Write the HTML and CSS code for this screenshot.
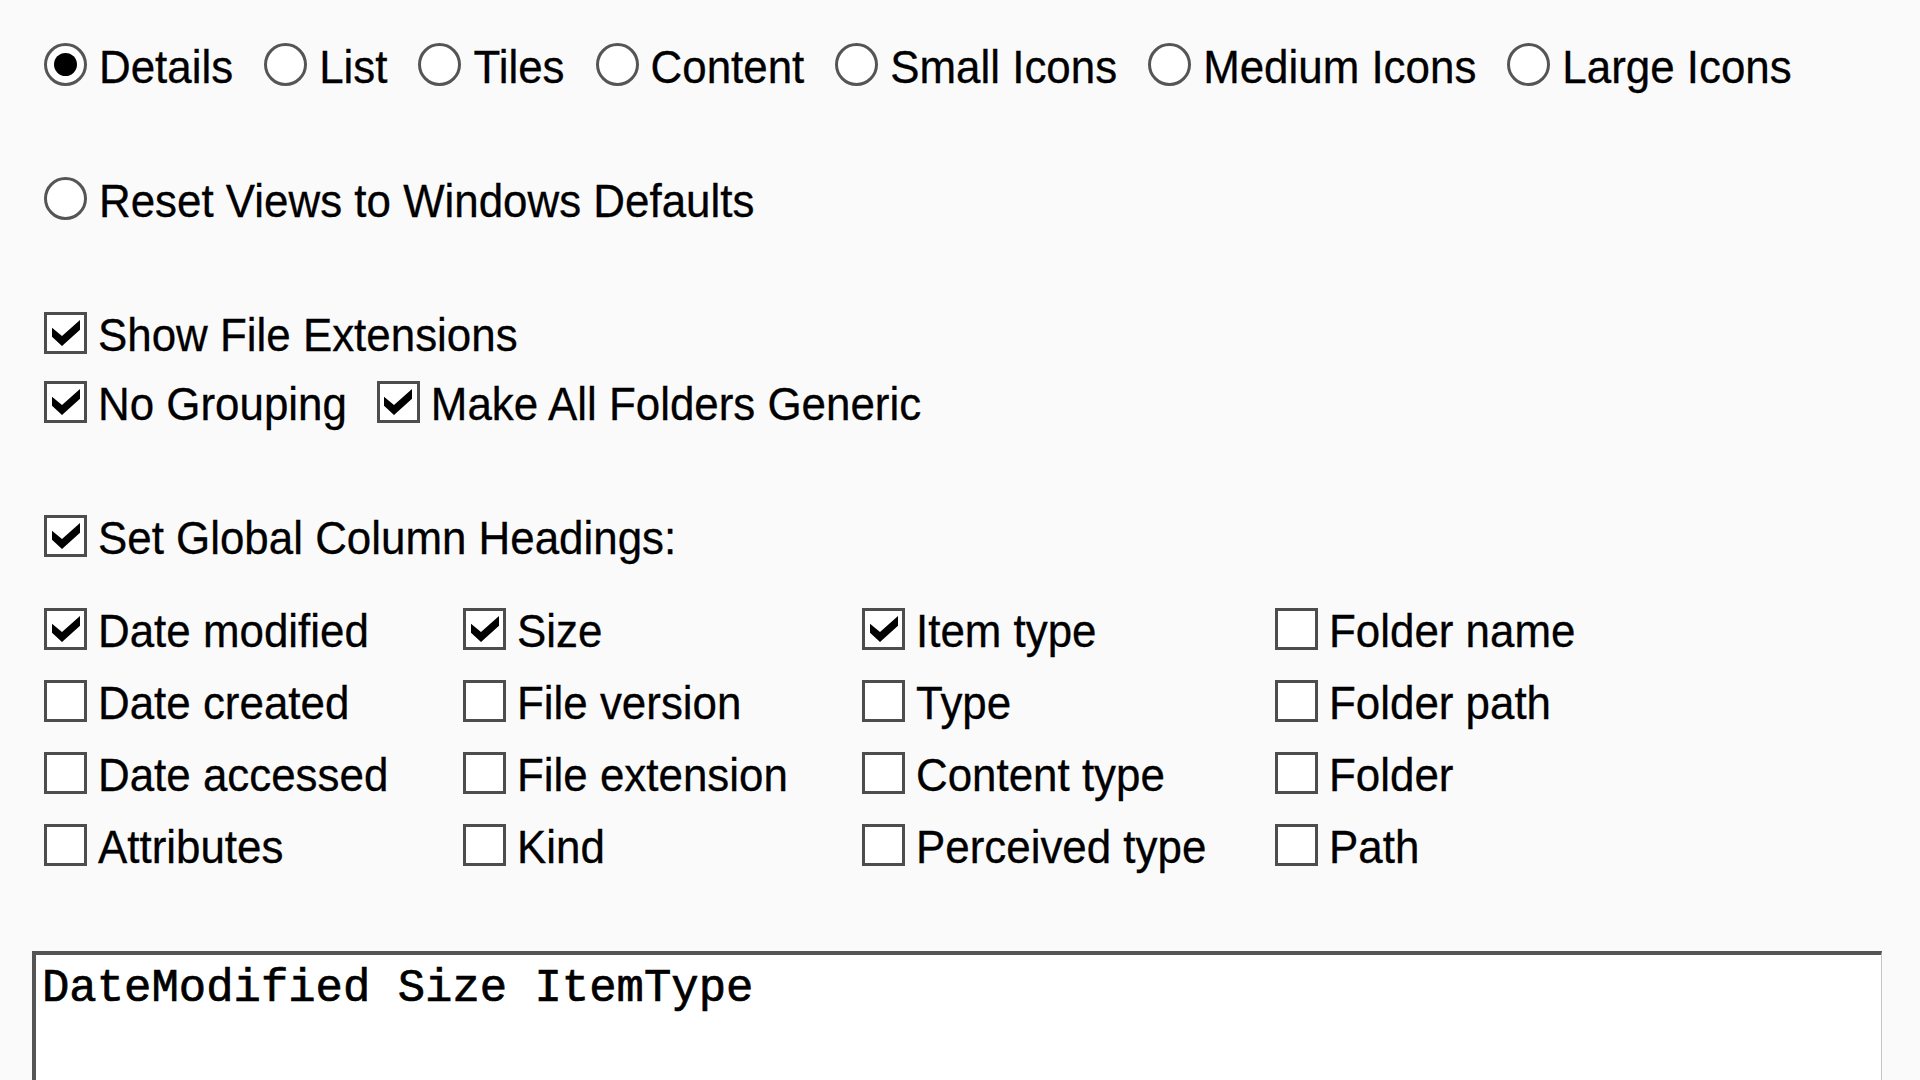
FILE: index.html
```html
<!DOCTYPE html>
<html lang="en">
<head>
<meta charset="utf-8">
<title>Folder View Options</title>
<link rel="stylesheet" href="styles.css">
</head>
<body>
<div class="page">
  <div class="row views">
    <div class="opt"><span class="radio"><span class="dot"></span></span><span class="label">Details</span></div>
    <div class="opt"><span class="radio"></span><span class="label">List</span></div>
    <div class="opt"><span class="radio"></span><span class="label">Tiles</span></div>
    <div class="opt"><span class="radio"></span><span class="label">Content</span></div>
    <div class="opt"><span class="radio"></span><span class="label">Small Icons</span></div>
    <div class="opt"><span class="radio"></span><span class="label">Medium Icons</span></div>
    <div class="opt"><span class="radio"></span><span class="label">Large Icons</span></div>
  </div>

  <div class="row reset">
    <div class="opt"><span class="radio"></span><span class="label">Reset Views to Windows Defaults</span></div>
  </div>

  <div class="row show">
    <div class="opt"><span class="box"><svg class="check" viewBox="0 0 7 7.5" preserveAspectRatio="none"><polygon points="0,2.2 2.5,4.6 7,0 7,2.8 2.5,7.5 0,4.8"/></svg></span><span class="label">Show File Extensions</span></div>
  </div>

  <div class="row nogroup">
    <div class="opt"><span class="box"><svg class="check" viewBox="0 0 7 7.5" preserveAspectRatio="none"><polygon points="0,2.2 2.5,4.6 7,0 7,2.8 2.5,7.5 0,4.8"/></svg></span><span class="label">No Grouping</span></div>
    <div class="opt"><span class="box"><svg class="check" viewBox="0 0 7 7.5" preserveAspectRatio="none"><polygon points="0,2.2 2.5,4.6 7,0 7,2.8 2.5,7.5 0,4.8"/></svg></span><span class="label">Make All Folders Generic</span></div>
  </div>

  <div class="row setglobal">
    <div class="opt"><span class="box"><svg class="check" viewBox="0 0 7 7.5" preserveAspectRatio="none"><polygon points="0,2.2 2.5,4.6 7,0 7,2.8 2.5,7.5 0,4.8"/></svg></span><span class="label">Set Global Column Headings:</span></div>
  </div>

  <div class="grid">
    <div class="opt"><span class="box"><svg class="check" viewBox="0 0 7 7.5" preserveAspectRatio="none"><polygon points="0,2.2 2.5,4.6 7,0 7,2.8 2.5,7.5 0,4.8"/></svg></span><span class="label">Date modified</span></div>
    <div class="opt"><span class="box"><svg class="check" viewBox="0 0 7 7.5" preserveAspectRatio="none"><polygon points="0,2.2 2.5,4.6 7,0 7,2.8 2.5,7.5 0,4.8"/></svg></span><span class="label">Size</span></div>
    <div class="opt"><span class="box"><svg class="check" viewBox="0 0 7 7.5" preserveAspectRatio="none"><polygon points="0,2.2 2.5,4.6 7,0 7,2.8 2.5,7.5 0,4.8"/></svg></span><span class="label">Item type</span></div>
    <div class="opt"><span class="box"></span><span class="label">Folder name</span></div>

    <div class="opt"><span class="box"></span><span class="label">Date created</span></div>
    <div class="opt"><span class="box"></span><span class="label">File version</span></div>
    <div class="opt"><span class="box"></span><span class="label">Type</span></div>
    <div class="opt"><span class="box"></span><span class="label">Folder path</span></div>

    <div class="opt"><span class="box"></span><span class="label">Date accessed</span></div>
    <div class="opt"><span class="box"></span><span class="label">File extension</span></div>
    <div class="opt"><span class="box"></span><span class="label">Content type</span></div>
    <div class="opt"><span class="box"></span><span class="label">Folder</span></div>

    <div class="opt"><span class="box"></span><span class="label">Attributes</span></div>
    <div class="opt"><span class="box"></span><span class="label">Kind</span></div>
    <div class="opt"><span class="box"></span><span class="label">Perceived type</span></div>
    <div class="opt"><span class="box"></span><span class="label">Path</span></div>
  </div>

  <div class="textbox">DateModified Size ItemType</div>
</div>
</body>
</html>
```

FILE: styles.css
```css
html, body {
  margin: 0;
  padding: 0;
  height: 100%;
  overflow: hidden;
  background: #fafafa;
}

.page {
  padding: 43px 0 0 32px;
  font-family: "Liberation Sans", Arial, sans-serif;
  font-size: 43.9px;
  color: #000;
}

.row {
  display: flex;
  align-items: center;
  height: 43px;
  padding-left: 12px;
}

.views { gap: 31px; }
.reset { margin-top: 91px; }
.show { margin-top: 91px; }
.nogroup { margin-top: 26px; gap: 30px; }
.setglobal { margin-top: 91px; }

.grid {
  margin-top: 50px;
  padding-left: 12px;
  display: grid;
  grid-template-columns: 419px 399px 413px auto;
  row-gap: 29px;
}

.opt {
  display: flex;
  align-items: center;
  height: 43px;
}

.radio {
  flex: none;
  width: 43px;
  height: 43px;
  box-sizing: border-box;
  border: 3px solid #555;
  border-radius: 50%;
  background: #fff;
  margin-right: 12px;
  display: flex;
  align-items: center;
  justify-content: center;
}

.dot {
  width: 23px;
  height: 23px;
  border-radius: 50%;
  background: #000;
}

.box {
  flex: none;
  width: 43px;
  height: 42px;
  box-sizing: border-box;
  border: 3px solid #4d4d4d;
  background: #fff;
  margin-right: 11px;
  display: flex;
  align-items: center;
  justify-content: center;
}

.check {
  width: 28px;
  height: 26px;
  fill: #000;
}

.label {
  display: inline-block;
  line-height: 44px;
  padding-top: 5px;
  white-space: nowrap;
  transform: scaleY(1.06);
  transform-origin: 50% 60%;
  -webkit-text-stroke: 0.3px #000;
}

.textbox {
  margin-top: 85px;
  width: 1850px;
  height: 200px;
  box-sizing: border-box;
  border-top: 4px solid #555;
  border-left: 4px solid #555;
  border-right: 1px solid #c4c4c4;
  background: #fff;
  padding: 8px 0 0 6px;
  font-family: "Liberation Mono", "Courier New", monospace;
  font-size: 45.6px;
  line-height: 52px;
  color: #000;
  white-space: pre;
  -webkit-text-stroke: 0.7px #000;
}
```
